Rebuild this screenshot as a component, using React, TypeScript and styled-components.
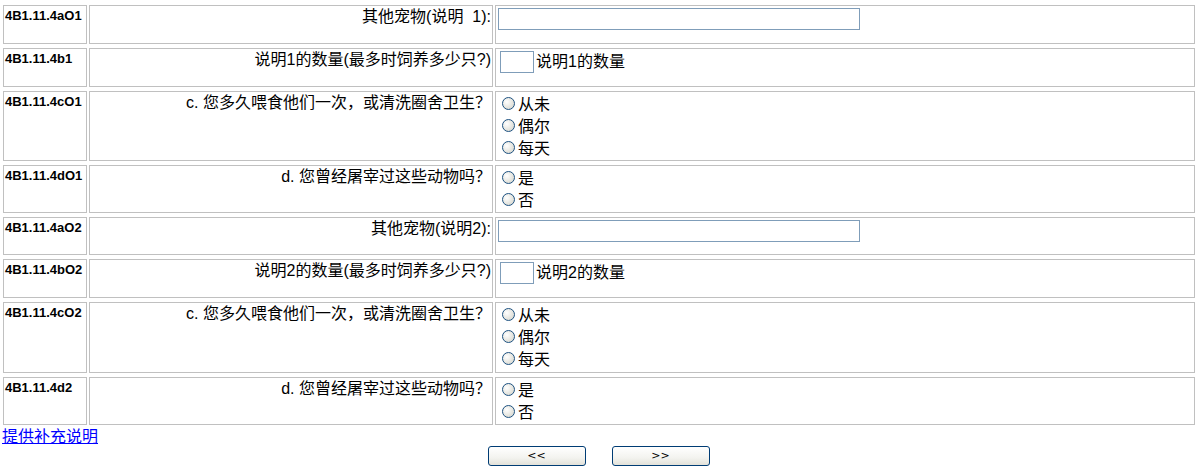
import React from "react";
import styled, { createGlobalStyle } from "styled-components";

const GlobalStyle = createGlobalStyle`
    body {
        margin: 0;
        background: #FFFFFF;
        font-family: "Liberation Sans", "Noto Sans CJK SC", sans-serif;
        color: #000000;
    }
`;

const SurveyTable = styled.table`
    width: 1196px;
    margin: 1px 0 0 1px;
    border-collapse: separate;
    border-spacing: 2px 4px;
    table-layout: fixed;
`;

const Cell = styled.td<{ $h: number }>`
    box-sizing: border-box;
    height: ${p => p.$h}px;
    border: 1px solid #C0C0C0;
    padding: 1px;
    vertical-align: top;
`;

const CodeCell = styled(Cell)`
    width: 84px;
    font-size: 13px;
    font-weight: bold;
    line-height: 16px;
    padding-top: 2px;
`;

const QuestionCell = styled(Cell)`
    width: 404px;
    text-align: right;
    font-size: 16px;
    line-height: 20px;
`;

const AnswerCell = styled(Cell)`
    font-size: 16px;
`;

const TextBox = styled.input<{ $w: number }>`
    box-sizing: border-box;
    display: inline-block;
    width: ${p => p.$w}px;
    height: 22px;
    border: 1px solid #7F9DB9;
    margin: 1px 0 0 1px;
    padding: 0 2px;
    vertical-align: middle;
`;

const NumberRow = styled.div`
    display: flex;
    align-items: center;
    gap: 2px;
    margin: 1px 0 0 3px;
    line-height: 22px;
`;

const RadioLine = styled.label`
    display: flex;
    align-items: center;
    height: 22px;
    &:first-child {
        margin-top: -1px;
    }
`;

const Radio = styled.input`
    appearance: none;
    box-sizing: border-box;
    width: 13px;
    height: 13px;
    margin: 1px 3px 0 5px;
    border: 1px solid #1C5180;
    border-radius: 50%;
    background: radial-gradient(circle at 35% 35%, #FFFFFF 0%, #E6E6E0 55%, #CFCFC8 100%);
`;

const LinkLine = styled.div`
    padding-left: 2px;
    font-size: 16px;
    line-height: 18px;
    margin-top: -1px;
    a {
        color: #0000FF;
        text-decoration: underline;
    }
`;

const NavBar = styled.div`
    display: flex;
    justify-content: center;
    gap: 26px;
    padding-right: 2px;
`;

const NavButton = styled.button`
    width: 98px;
    height: 20px;
    border: 1px solid #003C74;
    border-radius: 3px;
    background: linear-gradient(#FFFFFF, #F3F3EF 60%, #E2E1D9);
    font-family: "DejaVu Sans", sans-serif;
    font-size: 11px;
    color: #000000;
    padding: 0;
    line-height: 16px;
`;

type Question =
    | { code: string; text: string; h: number; kind: "text" }
    | { code: string; text: string; h: number; kind: "count"; unit: string }
    | { code: string; text: string; h: number; kind: "radio"; options: string[] };

const questions: Question[] = [
    { code: "4B1.11.4aO1", text: "其他宠物(说明\u00a0 1):", h: 39, kind: "text" },
    { code: "4B1.11.4b1", text: "说明1的数量(最多时饲养多少只?)", h: 39, kind: "count", unit: "说明1的数量" },
    { code: "4B1.11.4cO1", text: "c. 您多久喂食他们一次，或清洗圈舍卫生？", h: 70, kind: "radio", options: ["从未", "偶尔", "每天"] },
    { code: "4B1.11.4dO1", text: "d. 您曾经屠宰过这些动物吗？", h: 48, kind: "radio", options: ["是", "否"] },
    { code: "4B1.11.4aO2", text: "其他宠物(说明2):", h: 38, kind: "text" },
    { code: "4B1.11.4bO2", text: "说明2的数量(最多时饲养多少只?)", h: 39, kind: "count", unit: "说明2的数量" },
    { code: "4B1.11.4cO2", text: "c. 您多久喂食他们一次，或清洗圈舍卫生？", h: 71, kind: "radio", options: ["从未", "偶尔", "每天"] },
    { code: "4B1.11.4d2", text: "d. 您曾经屠宰过这些动物吗？", h: 48, kind: "radio", options: ["是", "否"] },
];

const Answer = ({ q }: { q: Question }) => {
    if (q.kind === "text") {
        return <TextBox type="text" $w={362} />;
    }
    if (q.kind === "count") {
        return (
            <NumberRow>
                <TextBox type="text" $w={34} style={{ margin: 0 }} />
                <span>{q.unit}</span>
            </NumberRow>
        );
    }
    return (
        <>
            {q.options.map(opt => (
                <RadioLine key={opt}>
                    <Radio type="radio" name={q.code} />
                    {opt}
                </RadioLine>
            ))}
        </>
    );
};

export default function App(): React.JSX.Element {
    return (
        <>
            <GlobalStyle />
            <SurveyTable>
                <tbody>
                    {questions.map(q => (
                        <tr key={q.code}>
                            <CodeCell $h={q.h}>{q.code}</CodeCell>
                            <QuestionCell $h={q.h}>{q.text}</QuestionCell>
                            <AnswerCell $h={q.h}>
                                <Answer q={q} />
                            </AnswerCell>
                        </tr>
                    ))}
                </tbody>
            </SurveyTable>
            <LinkLine>
                <a href="#">提供补充说明</a>
            </LinkLine>
            <NavBar>
                <NavButton>&lt;&lt;</NavButton>
                <NavButton>&gt;&gt;</NavButton>
            </NavBar>
        </>
    );
}
